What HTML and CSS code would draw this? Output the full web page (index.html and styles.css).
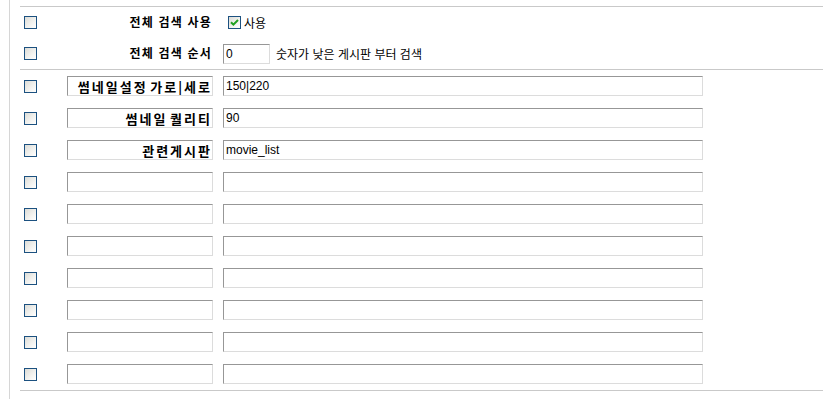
FILE: index.html
```html
<!DOCTYPE html>
<html lang="ko">
<head>
<meta charset="utf-8">
<title>설정</title>
<link rel="stylesheet" href="styles.css">
</head>
<body>
<div class="frame">
  <div class="rule"></div>
  <div class="group">
    <div class="row top">
      <div class="c1"><input type="checkbox" class="cb"></div>
      <div class="c2 head">전체 검색 사용</div>
      <div class="c3">
        <span class="cb checked"><svg viewBox="0 0 11 11" width="11" height="11"><path d="M2 5.2 L4.4 7.6 L9 3" fill="none" stroke="#21a121" stroke-width="2"/></svg></span>
        <span class="txt">사용</span>
      </div>
    </div>
    <div class="row top">
      <div class="c1"><input type="checkbox" class="cb"></div>
      <div class="c2 head">전체 검색 순서</div>
      <div class="c3">
        <input type="text" class="field small" value="0">
        <span class="txt note">숫자가 낮은 게시판 부터 검색</span>
      </div>
    </div>
  </div>
  <div class="rule"></div>
  <div class="group">
    <div class="row">
      <div class="c1"><input type="checkbox" class="cb"></div>
      <div class="c2"><input type="text" class="field key" value="썸네일설정 가로|세로"></div>
      <div class="c3"><input type="text" class="field val" value="150|220"></div>
    </div>
    <div class="row">
      <div class="c1"><input type="checkbox" class="cb"></div>
      <div class="c2"><input type="text" class="field key" value="썸네일 퀄리티"></div>
      <div class="c3"><input type="text" class="field val" value="90"></div>
    </div>
    <div class="row">
      <div class="c1"><input type="checkbox" class="cb"></div>
      <div class="c2"><input type="text" class="field key" value="관련게시판"></div>
      <div class="c3"><input type="text" class="field val" value="movie_list"></div>
    </div>
    <div class="row">
      <div class="c1"><input type="checkbox" class="cb"></div>
      <div class="c2"><input type="text" class="field key" value=""></div>
      <div class="c3"><input type="text" class="field val" value=""></div>
    </div>
    <div class="row">
      <div class="c1"><input type="checkbox" class="cb"></div>
      <div class="c2"><input type="text" class="field key" value=""></div>
      <div class="c3"><input type="text" class="field val" value=""></div>
    </div>
    <div class="row">
      <div class="c1"><input type="checkbox" class="cb"></div>
      <div class="c2"><input type="text" class="field key" value=""></div>
      <div class="c3"><input type="text" class="field val" value=""></div>
    </div>
    <div class="row">
      <div class="c1"><input type="checkbox" class="cb"></div>
      <div class="c2"><input type="text" class="field key" value=""></div>
      <div class="c3"><input type="text" class="field val" value=""></div>
    </div>
    <div class="row">
      <div class="c1"><input type="checkbox" class="cb"></div>
      <div class="c2"><input type="text" class="field key" value=""></div>
      <div class="c3"><input type="text" class="field val" value=""></div>
    </div>
    <div class="row">
      <div class="c1"><input type="checkbox" class="cb"></div>
      <div class="c2"><input type="text" class="field key" value=""></div>
      <div class="c3"><input type="text" class="field val" value=""></div>
    </div>
    <div class="row">
      <div class="c1"><input type="checkbox" class="cb"></div>
      <div class="c2"><input type="text" class="field key" value=""></div>
      <div class="c3"><input type="text" class="field val" value=""></div>
    </div>
  </div>
  <div class="rule"></div>
</div>
</body>
</html>
```
FILE: styles.css
```css
html, body {
  margin: 0;
  padding: 0;
  background: #ffffff;
}
body {
  font-family: "Noto Sans CJK KR", "Liberation Sans", sans-serif;
  font-size: 12px;
  color: #000;
}
.frame {
  margin-left: 9px;
  border-left: 1px solid #d6d6d6;
  padding: 6px 0 0 10px;
  min-height: 393px;
}
.rule {
  width: 803px;
  height: 1px;
  background: #c9c9c9;
}
.row {
  display: flex;
  align-items: center;
  height: 32px;
}
.row.top {
  height: 31px;
}
.c1 {
  width: 47px;
  flex: none;
  display: flex;
  align-items: center;
}
.c2 {
  width: 146px;
  flex: none;
}
.c3 {
  margin-left: 10px;
  display: flex;
  align-items: center;
}
.cb {
  appearance: none;
  -webkit-appearance: none;
  margin: 0 0 0 4px;
  width: 13px;
  height: 13px;
  box-sizing: border-box;
  border: 1px solid #1c5180;
  background: linear-gradient(135deg, #dcdcd7 0%, #f3f3f0 60%, #ffffff 100%);
  display: inline-flex;
  align-items: center;
  justify-content: center;
  flex: none;
}
.cb.checked {
  margin-left: 5px;
}
.cb svg {
  display: block;
}
.head {
  text-align: right;
  font-weight: bold;
  letter-spacing: 1.2px;
  padding-right: 1px;
  box-sizing: border-box;
  line-height: 14px;
  margin-top: -2px;
}
.txt {
  margin-left: 3px;
  line-height: 14px;
}
.note {
  margin-left: 6px;
}
.field {
  box-sizing: border-box;
  height: 20px;
  margin: 0;
  padding: 0 2px;
  border: 1px solid;
  border-color: #979797 #dcdcdc #dcdcdc #979797;
  background: #fff;
  outline: none;
  font-family: "Liberation Sans", Arial, sans-serif;
  font-size: 12px;
  color: #000;
}
.field.small {
  width: 47px;
}
.field.key {
  width: 146px;
  text-align: right;
  font-family: "Noto Sans CJK KR", sans-serif;
  font-size: 13px;
  font-weight: bold;
  letter-spacing: 2px;
  word-spacing: -3px;
  padding: 0 0 0 2px;
}
.field.val {
  width: 480px;
}
```
